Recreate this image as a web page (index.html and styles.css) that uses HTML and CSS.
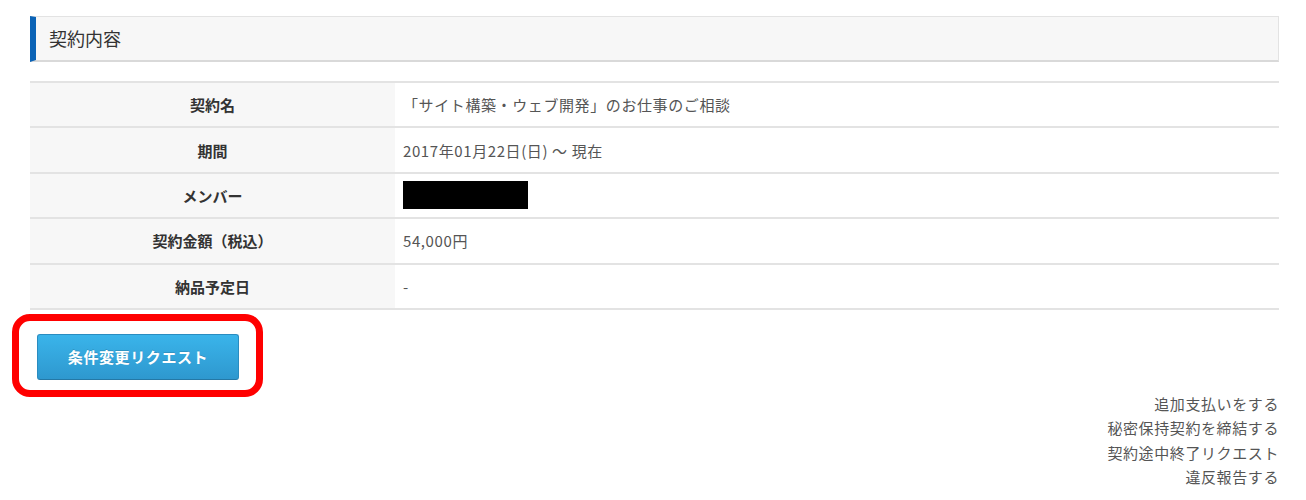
FILE: index.html
```html
<!DOCTYPE html>
<html lang="ja">
<head>
    <meta charset="UTF-8">
    <title>契約内容</title>
    <link rel="stylesheet" href="styles.css">
</head>
<body>
    <div class="contract">
        <h2 class="section-title">契約内容</h2>

        <table class="contract-table">
            <tr>
                <th>契約名</th>
                <td>「サイト構築・ウェブ開発」のお仕事のご相談</td>
            </tr>
            <tr>
                <th>期間</th>
                <td>2017年01月22日(日) ～ 現在</td>
            </tr>
            <tr>
                <th>メンバー</th>
                <td><span class="redacted"></span></td>
            </tr>
            <tr>
                <th>契約金額（税込）</th>
                <td>54,000円</td>
            </tr>
            <tr>
                <th>納品予定日</th>
                <td>-</td>
            </tr>
        </table>

        <div class="actions">
            <button class="btn-request">条件変更リクエスト</button>
            <span class="highlight"></span>
        </div>

        <ul class="sub-links">
            <li><a href="#">追加支払いをする</a></li>
            <li><a href="#">秘密保持契約を締結する</a></li>
            <li><a href="#">契約途中終了リクエスト</a></li>
            <li><a href="#">違反報告する</a></li>
        </ul>
    </div>
</body>
</html>
```

FILE: styles.css
```css
body {
    margin: 0;
    background-color: #fff;
    font-family: "Noto Sans CJK JP", "Noto Sans", sans-serif;
    color: #555;
}
.contract {
    width: 1249px;
    margin-left: 30px;
    padding-top: 16px;
}
.section-title {
    margin: 0;
    height: 43px;
    line-height: 43px;
    padding-left: 13px;
    background-color: #f7f7f7;
    border: 1px solid #e3e3e3;
    border-bottom: 2px solid #d9d9d9;
    border-left: 6px solid #0b63b6;
    font-size: 18px;
    font-weight: normal;
    color: #333;
}
.contract-table {
    width: 100%;
    margin-top: 19px;
    border-collapse: collapse;
    border-top: 2px solid #e3e3e3;
}
.contract-table th,
.contract-table td {
    height: 43.4px;
    padding: 0;
    border-bottom: 2px solid #e3e3e3;
    font-size: 15px;
}
.contract-table th {
    width: 365px;
    background-color: #f7f7f7;
    color: #333;
    font-weight: bold;
    text-align: center;
}
.contract-table td {
    padding-left: 8px;
    color: #555;
    text-align: left;
    letter-spacing: 0.6px;
}
.redacted {
    display: inline-block;
    width: 125px;
    height: 28px;
    background-color: #000;
    vertical-align: middle;
}
.actions {
    position: relative;
    margin-top: 24px;
    padding-left: 7px;
    height: 46px;
}
.btn-request {
    width: 202px;
    height: 46px;
    border: 1px solid #2a8cc0;
    border-bottom-color: #2478a6;
    border-radius: 3px;
    background: linear-gradient(#3ab4ea, #2e98cf);
    color: #fff;
    font-family: inherit;
    font-size: 15px;
    font-weight: bold;
    letter-spacing: 0.6px;
    text-shadow: 0 -1px 0 rgba(0,0,0,0.15);
    cursor: pointer;
}
.highlight {
    position: absolute;
    left: -18px;
    top: -20px;
    width: 237px;
    height: 69px;
    border: 7px solid #f00;
    border-radius: 18px;
    pointer-events: none;
}
.sub-links {
    list-style: none;
    margin: 12px 0 0;
    padding: 0;
    text-align: right;
    font-size: 15px;
    line-height: 24.5px;
    letter-spacing: 0.6px;
}
.sub-links a {
    color: #555;
    text-decoration: none;
}
```
